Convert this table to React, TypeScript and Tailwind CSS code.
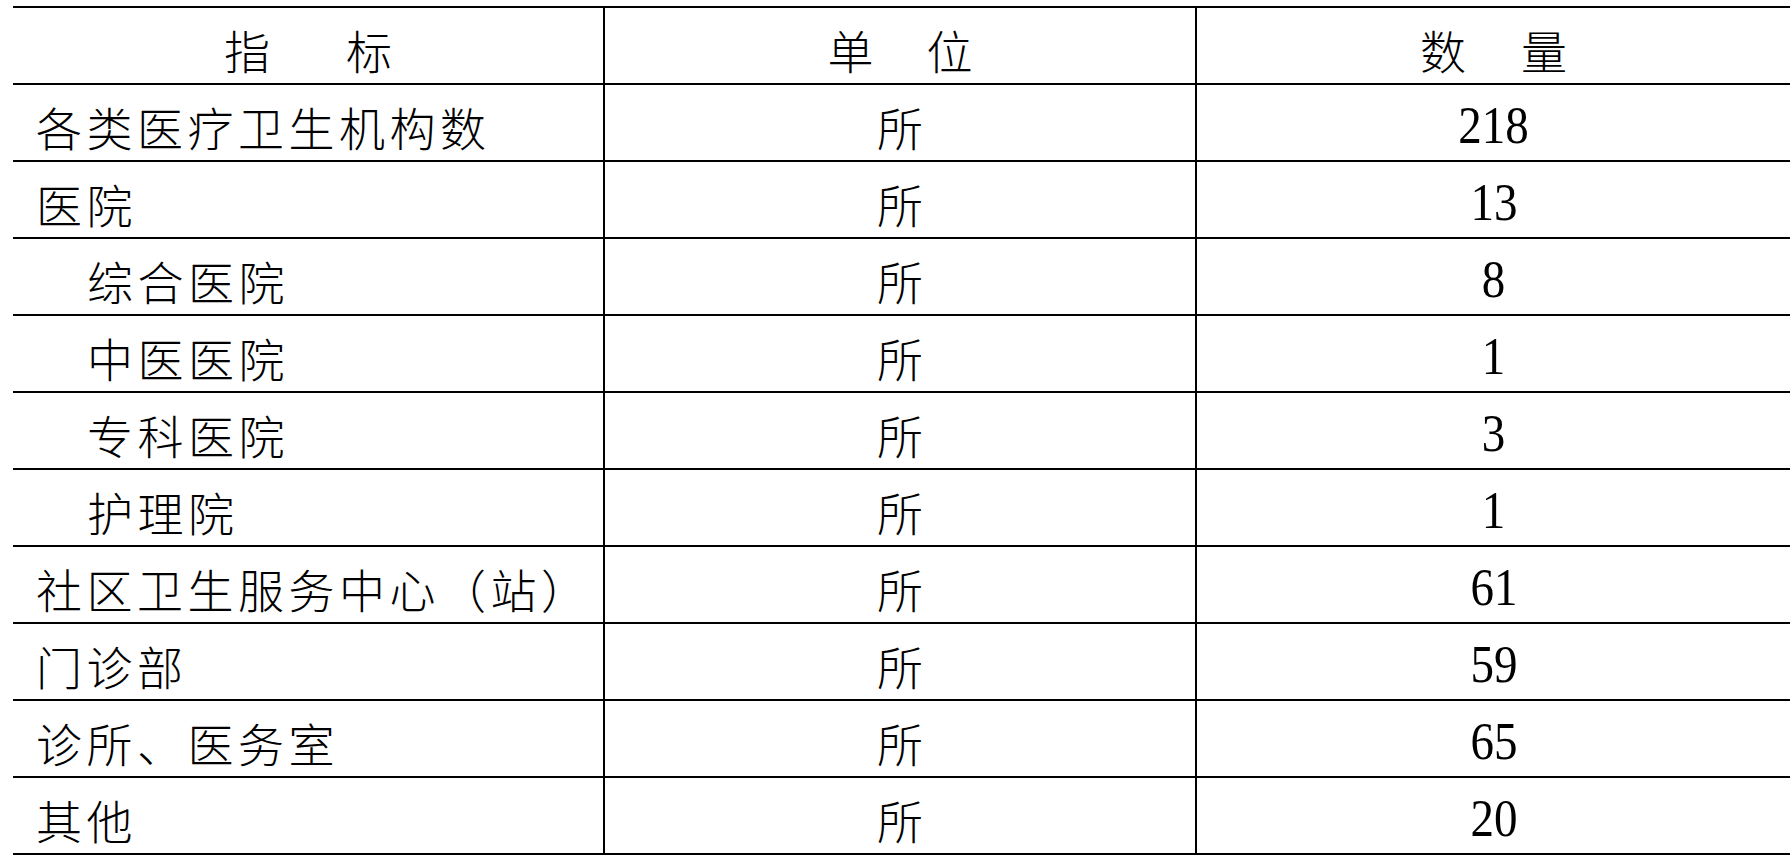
import React from "react";

const rows: { name: string; indent?: boolean; unit: string; value: string }[] = [
  { name: "各类医疗卫生机构数", unit: "所", value: "218" },
  { name: "医院", unit: "所", value: "13" },
  { name: "综合医院", indent: true, unit: "所", value: "8" },
  { name: "中医医院", indent: true, unit: "所", value: "1" },
  { name: "专科医院", indent: true, unit: "所", value: "3" },
  { name: "护理院", indent: true, unit: "所", value: "1" },
  { name: "社区卫生服务中心（站）", unit: "所", value: "61" },
  { name: "门诊部", unit: "所", value: "59" },
  { name: "诊所、医务室", unit: "所", value: "65" },
  { name: "其他", unit: "所", value: "20" },
];

const cjk = "font-['Noto_Sans_CJK_SC',sans-serif] font-light text-[46px] leading-none";
const num = "font-['Liberation_Serif',serif] text-[50px] leading-none";

export default function App() {
  return (
    <div className="w-[1790px] h-[856px] bg-white pt-[6px] pl-[13px] text-black overflow-hidden">
      <div className="w-[1777px] border-t-2 border-black">
        <div className="flex h-[77px] border-b-2 border-black">
          <div className={`w-[590px] flex items-center justify-center gap-[76px] pt-[6px] ${cjk}`}>
            <span>指</span>
            <span>标</span>
          </div>
          <div className={`w-[592px] border-l-2 border-black flex items-center justify-center gap-[53px] pt-[6px] ${cjk}`}>
            <span>单</span>
            <span>位</span>
          </div>
          <div className={`flex-1 border-l-2 border-black flex items-center justify-center gap-[55px] pt-[6px] ${cjk}`}>
            <span>数</span>
            <span>量</span>
          </div>
        </div>
        {rows.map((r, i) => (
          <div key={i} className="flex h-[77px] border-b-2 border-black">
            <div className={`w-[590px] flex items-center pt-[6px] tracking-[4.5px] ${r.indent ? "pl-[74px]" : "pl-[23px]"} ${cjk}`}>
              {r.name}
            </div>
            <div className={`w-[592px] border-l-2 border-black flex items-center justify-center pt-[6px] ${cjk}`}>
              {r.unit}
            </div>
            <div className={`flex-1 border-l-2 border-black flex items-center justify-center pt-[4px] ${num}`}>
              <span className="inline-block scale-x-[0.94] scale-y-[1.04]">{r.value}</span>
            </div>
          </div>
        ))}
      </div>
    </div>
  );
}
